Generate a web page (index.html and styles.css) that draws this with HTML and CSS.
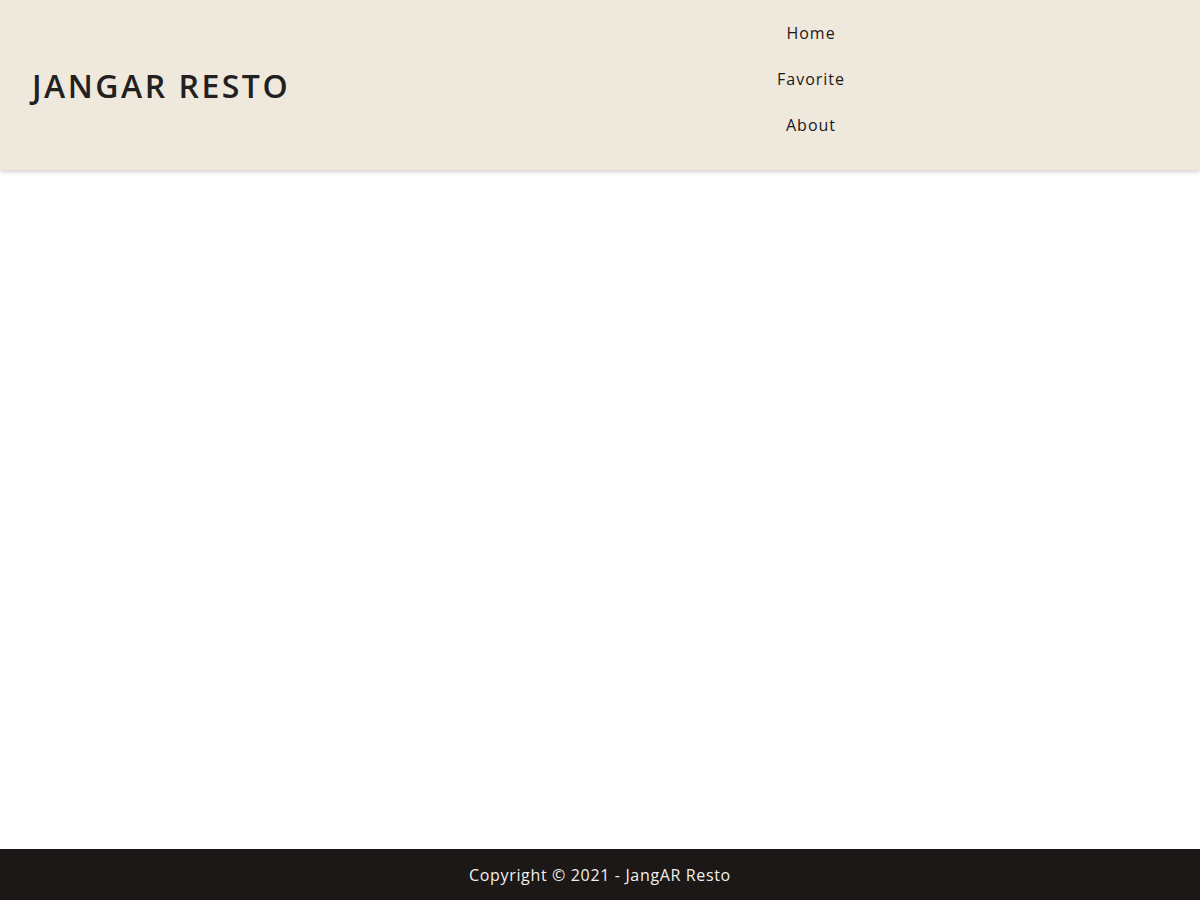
FILE: index.html
```html
<!DOCTYPE html>
<html lang="en">
<head>
<meta charset="utf-8">
<title>Jangar Resto</title>
<link rel="stylesheet" href="styles.css">
</head>
<body>
<div class="page">
  <header class="app-bar">
    <h1 class="brand">JANGAR RESTO</h1>
    <nav class="nav">
      <ul class="nav-list">
        <li class="nav-item"><a href="#" class="nav-link">Home</a></li>
        <li class="nav-item"><a href="#" class="nav-link">Favorite</a></li>
        <li class="nav-item"><a href="#" class="nav-link">About</a></li>
      </ul>
    </nav>
  </header>
  <main class="content"></main>
  <footer class="footer">
    <p class="footer-text">Copyright © 2021 - JangAR Resto</p>
  </footer>
</div>
</body>
</html>
```
FILE: styles.css
```css
* { box-sizing: border-box; }
html, body { margin: 0; padding: 0; }
body {
  font-family: "Open Sans", "Liberation Sans", sans-serif;
  background: #ffffff;
  color: #1c1818;
}
.page {
  min-height: 100vh;
  display: flex;
  flex-direction: column;
}
.app-bar {
  height: 170px;
  background: #eee9dc;
  display: flex;
  align-items: center;
  justify-content: space-between;
  padding-left: 32px;
  box-shadow: 0 2px 4px rgba(0, 0, 0, 0.18);
  position: relative;
  z-index: 1;
}
.brand {
  margin: 0;
  font-size: 32px;
  font-weight: 600;
  color: #222020;
  letter-spacing: 2.5px;
}
.nav {
  align-self: flex-start;
  padding-top: 21px;
  width: 200px;
  margin-right: 289px;
}
.nav-list {
  list-style: none;
  margin: 0;
  padding: 0;
  display: flex;
  flex-direction: column;
  align-items: center;
  gap: 22px;
}
.nav-link {
  display: block;
  font-size: 16px;
  line-height: 24px;
  color: #1c1818;
  text-decoration: none;
  letter-spacing: 1px;
}
.content { flex: 1; }
.footer {
  height: 51px;
  background: #1c1818;
  display: flex;
  align-items: center;
  justify-content: center;
}
.footer-text {
  margin: 0;
  color: #f2efe8;
  font-size: 16px;
  letter-spacing: 0.65px;
  line-height: 22px;
}
```
